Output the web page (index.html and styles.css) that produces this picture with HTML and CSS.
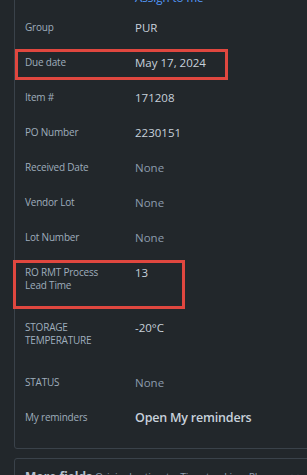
FILE: index.html
```html
<!DOCTYPE html>
<html>
<head>
<meta charset="utf-8">
<link rel="stylesheet" href="styles.css">
</head>
<body>
<div class="page">
  <section class="card details">
    <div class="assign"><span class="link">Assign to me</span></div>
    <div class="row"><div class="label">Group</div><div class="value">PUR</div></div>
    <div class="row marked"><div class="label">Due date</div><div class="value">May 17, 2024</div><span class="mark mark-due"></span></div>
    <div class="row"><div class="label">Item #</div><div class="value">171208</div></div>
    <div class="row"><div class="label">PO Number</div><div class="value">2230151</div></div>
    <div class="row"><div class="label">Received Date</div><div class="value none">None</div></div>
    <div class="row"><div class="label">Vendor Lot</div><div class="value none">None</div></div>
    <div class="row"><div class="label">Lot Number</div><div class="value none">None</div></div>
    <div class="row tall marked"><div class="label">RO RMT Process<br>Lead Time</div><div class="value">13</div><span class="mark mark-ro"></span></div>
    <div class="row tall"><div class="label">STORAGE<br>TEMPERATURE</div><div class="value">-20°C</div></div>
    <div class="row"><div class="label">STATUS</div><div class="value none">None</div></div>
    <div class="row"><div class="label">My reminders</div><div class="value strong">Open My reminders</div></div>
  </section>
  <section class="card more">
    <span class="more-title">More fields</span>
    <span class="more-list">Original estimate, Time tracking, Planned D...</span>
    <svg class="chev" width="12" height="12" viewBox="0 0 12 12"><path d="M3 4.5 L6 7.5 L9 4.5" fill="none" stroke="#9fadbc" stroke-width="1.4" stroke-linecap="round"/></svg>
  </section>
</div>
</body>
</html>
```
FILE: styles.css
```css
html, body {
  margin: 0;
  padding: 0;
  background: #22272b;
  overflow: hidden;
  height: 475px;
}
body {
  font-family: "Open Sans", "Noto Sans", sans-serif;
  color: #b6c2cf;
}
.page {
  padding-left: 14px;
  width: 296px;
}
.card {
  border: 1px solid #3a424a;
  border-radius: 3px;
  box-sizing: border-box;
  width: 310px;
}
.details {
  margin-top: -20px;
  padding: 9px 0 13px;
}
.assign {
  height: 16px;
  line-height: 16px;
  padding-left: 120px;
  margin-bottom: 4px;
  font-size: 11.5px;
}
.link { color: #579dff; }
.row {
  position: relative;
  display: grid;
  grid-template-columns: 120px 1fr;
  padding: 11px 0;
  line-height: 13px;
}
.row.tall { padding-bottom: 18px; }
.label {
  padding-left: 10px;
  font-size: 10px;
  color: #9fadbc;
  letter-spacing: -0.2px;
}
.value {
  font-size: 11.5px;
  color: #c7d1db;
}
.value.none { color: #8c9bab; }
.value.strong {
  font-size: 12.5px;
  font-weight: 600;
  color: #c7d1db;
  letter-spacing: -0.2px;
}
.mark {
  position: absolute;
  border: 3px solid #e0473f;
  box-sizing: border-box;
  pointer-events: none;
}
.mark-due {
  left: 0;
  top: 4px;
  bottom: 0;
  width: 213px;
}
.mark-ro {
  left: -2px;
  top: 5px;
  bottom: 1px;
  width: 172px;
}
.more {
  margin-top: 9px;
  padding: 10px 22px 0 10px;
  display: flex;
  align-items: center;
  gap: 3px;
  white-space: nowrap;
  line-height: 16px;
}
.more-title {
  font-size: 12px;
  font-weight: 700;
  color: #b6c2cf;
  flex: none;
}
.more-list {
  font-size: 10.5px;
  color: #8c9bab;
  overflow: hidden;
  text-overflow: ellipsis;
  letter-spacing: -0.2px;
}
.chev { margin-left: 8px; flex: none; }
```
